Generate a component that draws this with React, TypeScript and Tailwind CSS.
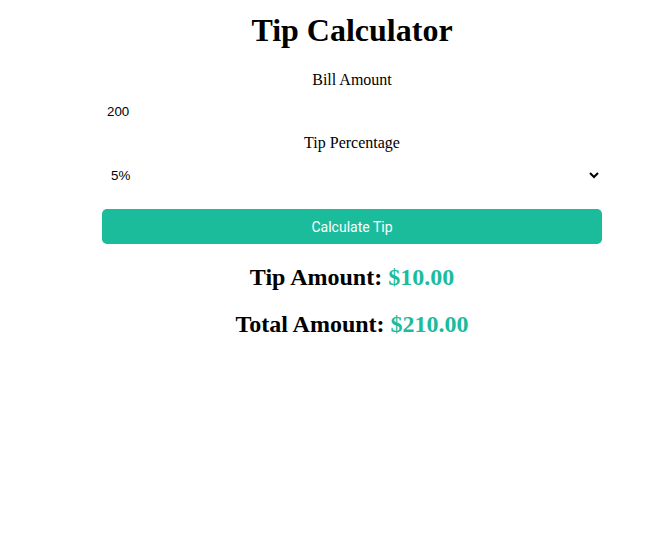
import { useState } from 'react';

export default function App() {
  const [bill, setBill] = useState('200');
  const [tip, setTip] = useState('5');

  const tipAmount = (parseFloat(bill) || 0) * (parseFloat(tip) / 100);
  const total = (parseFloat(bill) || 0) + tipAmount;

  return (
    <div className="min-h-screen bg-white font-['Liberation_Serif',serif] text-black">
      <div className="ml-[102px] flex w-[500px] flex-col items-stretch text-center">
        <h1 className="mt-[12px] text-[32px] font-bold leading-[37px]">Tip Calculator</h1>

        <label className="mt-[22px] block text-base leading-[18px]">Bill Amount</label>
        <input
          type="number"
          value={bill}
          onChange={(e) => setBill(e.target.value)}
          className="mt-[7px] h-[30px] w-full border-0 px-[5px] text-left font-['Liberation_Sans',sans-serif] text-[13.33px] outline-none"
        />

        <label className="mt-[8px] block text-base leading-[18px]">Tip Percentage</label>
        <select
          value={tip}
          onChange={(e) => setTip(e.target.value)}
          className="mt-[8px] h-[30px] w-full border-0 px-[5px] text-left font-['Liberation_Sans',sans-serif] text-[13.33px] outline-none"
        >
          <option value="5">5%</option>
          <option value="10">10%</option>
          <option value="15">15%</option>
          <option value="20">20%</option>
        </select>

        <button
          type="button"
          className="mt-[19px] h-[35px] w-full rounded-[5px] bg-[#1abc9c] font-['Roboto',sans-serif] text-sm text-white"
        >
          Calculate Tip
        </button>

        <h2 className="mt-[19px] text-2xl font-bold leading-[28px]">
          Tip Amount: <span className="text-[#1abc9c]">${tipAmount.toFixed(2)}</span>
        </h2>
        <h2 className="mt-[19px] text-2xl font-bold leading-[28px]">
          Total Amount: <span className="text-[#1abc9c]">${total.toFixed(2)}</span>
        </h2>
      </div>
    </div>
  );
}
